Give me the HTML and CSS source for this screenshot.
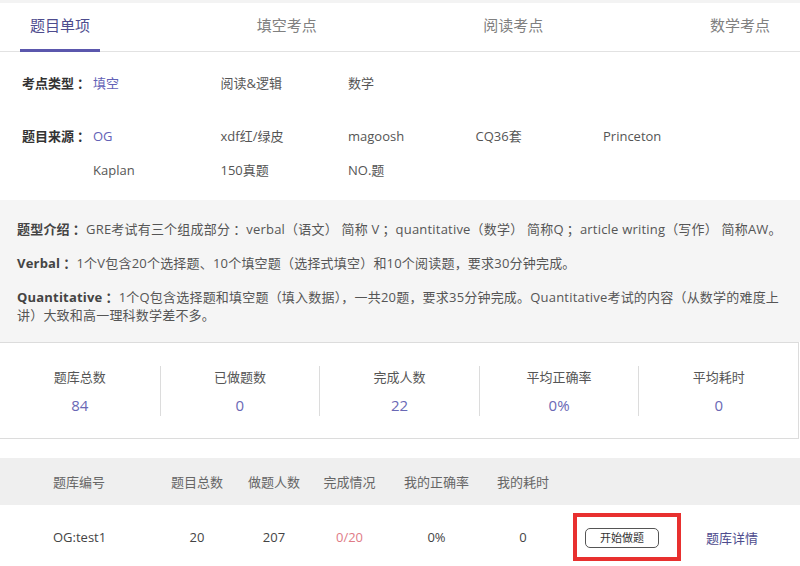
FILE: index.html
```html
<!DOCTYPE html>
<html lang="zh-CN">
<head>
<meta charset="utf-8">
<title>题目单项</title>
<link rel="stylesheet" href="styles.css">
</head>
<body>
<div class="page">
  <div class="top-strip"></div>
  <nav class="tabs">
    <div class="tab active">题目单项</div>
    <div class="tab">填空考点</div>
    <div class="tab">阅读考点</div>
    <div class="tab">数学考点</div>
  </nav>

  <section class="filters">
    <div class="filter-row">
      <div class="filter-label">考点类型<span class="colon">：</span></div>
      <div class="options">
        <span class="opt selected">填空</span>
        <span class="opt">阅读&amp;逻辑</span>
        <span class="opt">数学</span>
      </div>
    </div>
    <div class="filter-row sources">
      <div class="filter-label">题目来源<span class="colon">：</span></div>
      <div class="options">
        <span class="opt selected">OG</span>
        <span class="opt">xdf红/绿皮</span>
        <span class="opt">magoosh</span>
        <span class="opt">CQ36套</span>
        <span class="opt">Princeton</span>
        <span class="opt">Kaplan</span>
        <span class="opt">150真题</span>
        <span class="opt">NO.题</span>
      </div>
    </div>
  </section>

  <section class="intro">
    <p><b>题型介绍<span class="colon">：</span></b>GRE考试有三个组成部分<span class="colon">：</span>verbal（语文） 简称 V<span class="colon">；</span>quantitative（数学） 简称Q<span class="colon">；</span>article writing（写作） 简称AW。</p>
    <p><b>Verbal<span class="colon">：</span></b>1个V包含20个选择题、10个填空题（选择式填空）和10个阅读题，要求30分钟完成。</p>
    <p><b>Quantitative<span class="colon">：</span></b>1个Q包含选择题和填空题（填入数据），一共20题，要求35分钟完成。Quantitative考试的内容（从数学的难度上讲）大致和高一理科数学差不多。</p>
  </section>

  <section class="stats">
    <div class="stat"><div class="stat-label">题库总数</div><div class="stat-value">84</div></div>
    <div class="stat"><div class="stat-label">已做题数</div><div class="stat-value">0</div></div>
    <div class="stat"><div class="stat-label">完成人数</div><div class="stat-value">22</div></div>
    <div class="stat"><div class="stat-label">平均正确率</div><div class="stat-value">0%</div></div>
    <div class="stat"><div class="stat-label">平均耗时</div><div class="stat-value">0</div></div>
  </section>

  <section class="table">
    <div class="trow thead">
      <div class="c1">题库编号</div>
      <div>题目总数</div>
      <div>做题人数</div>
      <div>完成情况</div>
      <div>我的正确率</div>
      <div>我的耗时</div>
      <div></div>
      <div></div>
    </div>
    <div class="trow tbody">
      <div class="c1">OG:test1</div>
      <div>20</div>
      <div>207</div>
      <div class="progress">0/20</div>
      <div>0%</div>
      <div>0</div>
      <div class="action"><span class="highlight"><span class="btn">开始做题</span></span></div>
      <div class="detail">题库详情</div>
    </div>
  </section>
</div>
</body>
</html>
```

FILE: styles.css
```css
* { box-sizing: border-box; }
html, body { margin: 0; padding: 0; background: #fff; }
body {
  font-family: "Open Sans", "Noto Sans CJK SC", sans-serif;
  color: #444;
  font-size: 13px;
}
.page { width: 800px; overflow: hidden; }

.top-strip { height: 3px; background: #f3f3f3; }

.tabs {
  display: flex;
  justify-content: space-between;
  height: 49px;
  padding: 0 20px 0 17px;
  border-bottom: 1px solid #e2e2e2;
}
.tab {
  width: 80px;
  text-align: center;
  font-size: 15px;
  line-height: 45px;
  color: #808080;
  border-bottom: 3px solid transparent;
  margin-bottom: -1px;
}
.tab.active { color: #4e4c8e; border-bottom-color: #5b57ad; margin-left: 3px; }

.colon { padding-left: 3px; }

.filters { padding: 14px 0 13px 22px; }
.filter-row { display: flex; }
.filter-row.sources { margin-top: 19px; }
.filter-label {
  width: 71px;
  line-height: 34px;
  font-weight: bold;
  color: #333;
  font-size: 13px;
  white-space: nowrap;
}
.options {
  display: grid;
  grid-template-columns: repeat(5, 127.5px);
  grid-auto-rows: 34px;
}
.opt { line-height: 34px; color: #555; font-size: 13px; }
.opt.selected { color: #6361b6; }

.intro {
  background: #f5f5f5;
  padding: 20px 17px 18px 17px;
  color: #555;
}
.intro p { margin: 0 0 16px; line-height: 18px; font-size: 13px; letter-spacing: 0.2px; }
.intro p:last-child { margin-bottom: 0; }
.intro b { color: #444; }

.stats {
  display: flex;
  border: 1px solid #dcdcdc;
  border-left: none;
  width: 799px;
  padding: 23px 0 22px;
}
.stat { width: 160px; text-align: center; }
.stat + .stat { border-left: 1px solid #dcdcdc; }
.stat-label { line-height: 22px; color: #555; font-size: 13px; }
.stat-value { margin-top: 6px; line-height: 22px; color: #6a68b5; font-size: 15px; }

.table { margin-top: 19px; }
.trow {
  display: grid;
  grid-template-columns: 160px 74px 80px 71px 103px 70px 128px 92px 22px;
  align-items: center;
  text-align: center;
}
.trow .c1 { text-align: left; padding-left: 53px; }
.thead { background: #efefef; height: 47px; color: #666; font-size: 13px; }
.tbody { height: 64px; color: #444; font-size: 13px; }
.progress { color: #e07b86; }
.action { display: flex; justify-content: center; }
.highlight {
  display: inline-flex;
  border: 4px solid #e8302f;
  padding: 11px 18px 9px 8px;
  margin-left: 10px;
}
.btn {
  display: inline-block;
  width: 74px;
  height: 20px;
  line-height: 18px;
  border: 1px solid #555;
  border-radius: 5px;
  font-size: 11px;
  color: #333;
  text-align: center;
}
.detail { color: #4e4c8e; text-align: left; padding-left: 20px; }
```
